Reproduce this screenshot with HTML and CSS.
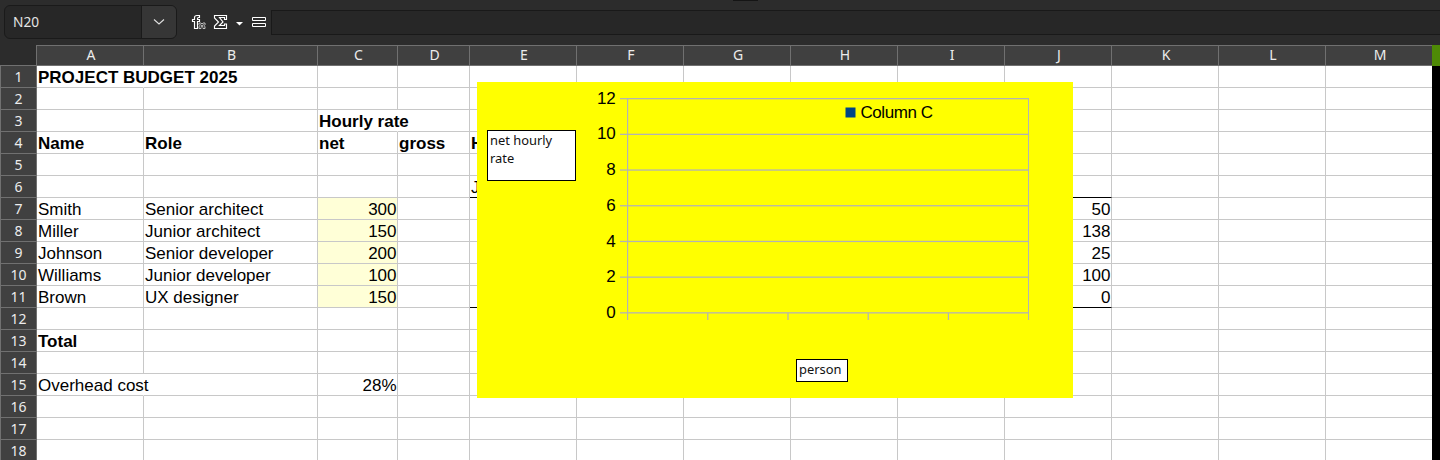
FILE: index.html
```
<!DOCTYPE html>
<html lang="en">
<head>
<meta charset="utf-8">
<title>Project budget</title>
<link rel="stylesheet" href="styles.css">
</head>
<body>
<header class="toolbar">
  <div class="namebox"><span class="cellref">N20</span><span class="drop"><svg width="12" height="6" viewBox="0 0 12 6"><path d="M1 .5 6 5 11 .5" fill="none" stroke="#dedede" stroke-width="1.1"/></svg></span></div>
  <svg class="tools" width="80" height="20" viewBox="0 0 80 20" fill="none" stroke="#fff">
    <path d="M3.500 16.500V9.500H1.500V7.500H3.500V5.500Q3.500 3.500 6 3.500H8.500V5.500H7.500Q6.500 5.500 6.500 6.500V7.500H8.500V9.500H6.500V16.500Z" stroke-width="1.150"/>
    <path d="M8 11H10L11 12 12 11H14V12.800L13 13.800 14 14.800V16.500H12L11 15.500 10 16.500H8V14.800L9 13.800 8 12.800ZM9.500 12.300 12.500 15.300M12.500 12.300 9.500 15.300" stroke="#d0d0d0" stroke-width=".9"/>
    <path d="M23.500 3.500H35.500V7.500H33.500V5.500H28.500L32 10 28.500 13.500H33.500V12H35.500V16.500H23.500V14L27.500 10 23.500 6Z" stroke-width="1.150"/>
    <path d="M45 10H52L48.500 13.500Z" fill="#fff" stroke="none"/>
    <path d="M61.500 5.500H74.500V8.500H61.500ZM61.500 11.500H74.500V14.500H61.500Z"/>
  </svg>
  <div class="formula"></div>
  <i class="handle"></i>
</header>
<main class="sheet">
  <div class="grid" id="grid"></div>
  <aside class="edge"></aside>
  <section class="chart">
    <svg width="595" height="316" viewBox="477 82 595 316">
      <g class="axis" id="axis"></g>
      <rect x="845.500" y="107.500" width="10" height="10" fill="#004586"/>
      <text class="label" x="860.500" y="118" textLength="72.500">Column C</text>
    </svg>
    <div class="note rate">net hourly<br>rate</div>
    <div class="note person">person</div>
  </section>
</main>
<script src="sheet.js"></script>
</body>
</html>
```
FILE: styles.css
```
* { box-sizing: border-box; }
body { margin: 0; width: 1440px; height: 460px; overflow: hidden; background: #2c2c2c; font-family: "Liberation Sans", Arial, sans-serif; }
.toolbar { position: relative; height: 45px; display: flex; align-items: flex-start; padding: 5px 0 0 4px; background: #2c2c2c; }
.namebox { width: 173px; height: 34px; display: flex; border: 1px solid #1a1a1a; border-radius: 6px; overflow: hidden; background: #272727; }
.cellref { flex: 1; padding-left: 8px; font: 13.7px/32px "Noto Sans", sans-serif; color: #e4e4e4; }
.drop { width: 35px; display: flex; align-items: center; justify-content: center; background: #363636; border-left: 1px solid #1a1a1a; }
.tools { margin: 7px 0 0 14px; }
.formula { flex: 1; height: 25px; margin-top: 5px; background: #272727; border: 1px solid #191919; border-right: 0; }
.handle { position: absolute; left: 733px; top: 0; width: 25px; height: 1px; background: #151515; }
.sheet { position: relative; display: flex; height: 415px; overflow: hidden; }
.grid { width: 1432px; flex: none; display: grid; grid-template-columns: 37px 107px 174px 80px 72px repeat(9, 107px); grid-template-rows: 21px; grid-auto-rows: 22px; overflow: hidden; }
.colhead, .rowhead { background: #404040; color: #ececec; border-right: 1px solid #707070; border-bottom: 1px solid #707070; font: 14px/20px "Noto Sans", sans-serif; text-align: center; }
.colhead { border-top: 1px solid #707070; line-height: 18px; padding-left: 2px; }
.rowhead { border-left: 1px solid #707070; line-height: 21px; }
.corner { border-right: 1px solid #707070; border-bottom: 1px solid #707070; }
.cell { height: 22px; background: #fff; border-right: 1px solid #c8c8c8; border-bottom: 1px solid #c8c8c8; color: #000; font-size: 17px; line-height: 24px; padding-left: 1px; white-space: nowrap; min-width: 0; }
.bold { font-weight: bold; }
.num { text-align: right; padding: 0 .5px 0 0; }
.spill { border-right-color: #fff; }
.over { position: relative; z-index: 1; }
.input { background: #ffffd7; }
.rule { border-bottom-color: #000; }
.edge { width: 8px; background: linear-gradient(#4e8a06 0 21px, #000 21px); }
.chart { position: absolute; z-index: 2; left: 477px; top: 37px; width: 595.5px; height: 316px; background: #ff0; }
.chart svg { display: block; }
.axis { fill: #b3b3b3; }
.label { font-size: 17px; fill: #000; }
.note { position: absolute; border: 1px solid #000; background: #fff; color: #111; font: 12.9px/18px "Noto Sans", sans-serif; padding: 0 2px; }
.rate { left: 10px; top: 48px; width: 89px; height: 51px; }
.person { left: 319px; top: 277px; width: 52px; height: 23px; }
```
FILE: sheet.js
```
const cells = {
  A1: 'PROJECT BUDGET 2025', C3: 'Hourly rate', A4: 'Name', B4: 'Role', C4: 'net', D4: 'gross', E4: 'H', E6: 'J',
  A7: 'Smith', B7: 'Senior architect', C7: '300', J7: '50',
  A8: 'Miller', B8: 'Junior architect', C8: '150', J8: '138',
  A9: 'Johnson', B9: 'Senior developer', C9: '200', J9: '25',
  A10: 'Williams', B10: 'Junior developer', C10: '100', J10: '100',
  A11: 'Brown', B11: 'UX designer', C11: '150', J11: '0',
  A13: 'Total', A15: 'Overhead cost', C15: '28%'
};
const bold = ['A1', 'C3', 'A4', 'B4', 'C4', 'D4', 'E4', 'A13'];
const spill = ['A1', 'C3', 'A15'];
const columns = 'ABCDEFGHIJKLM'.split('');
let html = '<div class="corner"></div>' + columns.map(c => `<div class="colhead">${c}</div>`).join('');
for (let row = 1; row <= 18; row++) {
  html += `<div class="rowhead">${row}</div>`;
  for (const col of columns) {
    const key = col + row;
    const names = ['cell'];
    if (bold.includes(key)) names.push('bold');
    if (spill.includes(key)) names.push('spill', 'over');
    if (/^\d/.test(cells[key] || '')) names.push('num');
    if (col === 'C' && row > 6 && row < 12) names.push('input');
    if (col >= 'E' && col <= 'J' && (row === 6 || row === 11)) names.push('rule');
    html += `<div class="${names.join(' ')}">${cells[key] || ''}</div>`;
  }
}
document.getElementById('grid').innerHTML = html;

let axis = '<rect x="627" y="98" width="1.2" height="222"/><rect x="1028" y="98" width="1" height="222"/>';
for (let i = 0; i <= 6; i++) {
  const y = 98 + i * 35.7;
  axis += `<rect x="620" y="${y}" width="409" height="1.3"/><text class="label" x="615.8" y="${Math.floor(y + 0.25) + 6}" text-anchor="end">${12 - i * 2}</text>`;
}
for (let i = 1; i < 5; i++) axis += `<rect x="${627 + i * 80.2}" y="313" width="1.2" height="7"/>`;
document.getElementById('axis').innerHTML = axis;
```
